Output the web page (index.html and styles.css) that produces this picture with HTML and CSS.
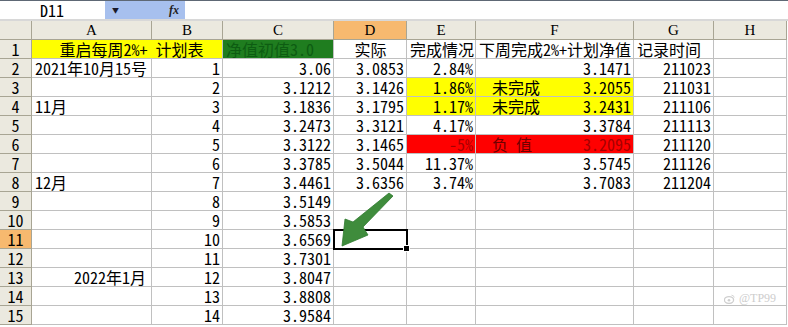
FILE: index.html
```html
<!DOCTYPE html>
<html>
<head>
<meta charset="utf-8">
<link rel="stylesheet" href="styles.css">
</head>
<body>
<div class="app">
  <div class="fbar">
    <div class="namebox">D11</div>
    <div class="drop"><span class="tri">▼</span><span class="fx">fx</span></div>
    <div class="formula"></div>
  </div>
  <div class="grid">
    <div class="c h corner"></div>
    <div class="c h">A</div>
    <div class="c h">B</div>
    <div class="c h">C</div>
    <div class="c h hs">D</div>
    <div class="c h">E</div>
    <div class="c h">F</div>
    <div class="c h">G</div>
    <div class="c h">H</div>

    <div class="c r">1</div>
    <div class="c yel span2 ctr">&nbsp;重启每周2%+ 计划表</div>
    <div class="c grn">净值初值3.0</div>
    <div class="c ctr">实际</div>
    <div class="c">完成情况</div>
    <div class="c">下周完成2%+计划净值</div>
    <div class="c">记录时间</div>
    <div class="c"></div>

    <div class="c r">2</div>
    <div class="c">2021年10月15号</div>
    <div class="c n">1</div>
    <div class="c n">3.06</div>
    <div class="c n">3.0853</div>
    <div class="c n">2.84%</div>
    <div class="c n">3.1471</div>
    <div class="c n">211023</div>
    <div class="c"></div>

    <div class="c r">3</div>
    <div class="c"></div>
    <div class="c n">2</div>
    <div class="c n">3.1212</div>
    <div class="c n">3.1426</div>
    <div class="c n yel">1.86%</div>
    <div class="c yel split"><span class="lbl">未完成</span><span>3.2055</span></div>
    <div class="c n">211031</div>
    <div class="c"></div>

    <div class="c r">4</div>
    <div class="c">11月</div>
    <div class="c n">3</div>
    <div class="c n">3.1836</div>
    <div class="c n">3.1795</div>
    <div class="c n yel">1.17%</div>
    <div class="c yel split"><span class="lbl">未完成</span><span>3.2431</span></div>
    <div class="c n">211106</div>
    <div class="c"></div>

    <div class="c r">5</div>
    <div class="c"></div>
    <div class="c n">4</div>
    <div class="c n">3.2473</div>
    <div class="c n">3.3121</div>
    <div class="c n">4.17%</div>
    <div class="c n">3.3784</div>
    <div class="c n">211113</div>
    <div class="c"></div>

    <div class="c r">6</div>
    <div class="c"></div>
    <div class="c n">5</div>
    <div class="c n">3.3122</div>
    <div class="c n">3.1465</div>
    <div class="c n red">-5%</div>
    <div class="c red split"><span class="lbl neg">负 值</span><span>3.2095</span></div>
    <div class="c n">211120</div>
    <div class="c"></div>

    <div class="c r">7</div>
    <div class="c"></div>
    <div class="c n">6</div>
    <div class="c n">3.3785</div>
    <div class="c n">3.5044</div>
    <div class="c n">11.37%</div>
    <div class="c n">3.5745</div>
    <div class="c n">211126</div>
    <div class="c"></div>

    <div class="c r">8</div>
    <div class="c">12月</div>
    <div class="c n">7</div>
    <div class="c n">3.4461</div>
    <div class="c n">3.6356</div>
    <div class="c n">3.74%</div>
    <div class="c n">3.7083</div>
    <div class="c n">211204</div>
    <div class="c"></div>

    <div class="c r">9</div>
    <div class="c"></div>
    <div class="c n">8</div>
    <div class="c n">3.5149</div>
    <div class="c"></div><div class="c"></div><div class="c"></div><div class="c"></div><div class="c"></div>

    <div class="c r">10</div>
    <div class="c"></div>
    <div class="c n">9</div>
    <div class="c n">3.5853</div>
    <div class="c"></div><div class="c"></div><div class="c"></div><div class="c"></div><div class="c"></div>

    <div class="c r rs">11</div>
    <div class="c"></div>
    <div class="c n">10</div>
    <div class="c n">3.6569</div>
    <div class="c sel"></div><div class="c"></div><div class="c"></div><div class="c"></div><div class="c"></div>

    <div class="c r">12</div>
    <div class="c"></div>
    <div class="c n">11</div>
    <div class="c n">3.7301</div>
    <div class="c"></div><div class="c"></div><div class="c"></div><div class="c"></div><div class="c"></div>

    <div class="c r">13</div>
    <div class="c n pr">2022年1月</div>
    <div class="c n">12</div>
    <div class="c n">3.8047</div>
    <div class="c"></div><div class="c"></div><div class="c"></div><div class="c"></div><div class="c"></div>

    <div class="c r">14</div>
    <div class="c"></div>
    <div class="c n">13</div>
    <div class="c n">3.8808</div>
    <div class="c"></div><div class="c"></div><div class="c"></div><div class="c"></div><div class="c"></div>

    <div class="c r">15</div>
    <div class="c"></div>
    <div class="c n">14</div>
    <div class="c n">3.9584</div>
    <div class="c"></div><div class="c"></div><div class="c"></div><div class="c"></div><div class="c"></div>
  </div>

  <svg class="arrow" width="788" height="327" viewBox="0 0 788 327">
    <polygon points="389,193 393,196 363,227 368,235 342,246 345,219 353,222" fill="#3f8c3c" stroke="#2f7a2f" stroke-width="0.8" stroke-linejoin="round"/>
  </svg>

  <div class="wm">
    <svg width="11" height="10" viewBox="0 0 11 10"><ellipse cx="5" cy="6" rx="4.6" ry="3.4" fill="none" stroke="#cfcfcf" stroke-width="1.3"/><circle cx="5" cy="6.3" r="1.3" fill="#cfcfcf"/><path d="M7.5 1.2 Q10 1.2 10.2 3.6" fill="none" stroke="#d6d6d6" stroke-width="1"/></svg>
    <span>@TP99</span>
  </div>
</div>
</body>
</html>
```

FILE: styles.css
```css
html, body {
  margin: 0;
  padding: 0;
  background: #ffffff;
}
body {
  font-family: "Noto Sans Mono CJK SC", "Noto Sans CJK SC", "Liberation Mono", monospace;
  font-size: 16px;
  color: #000;
  overflow: hidden;
}
.app {
  position: relative;
  width: 788px;
  height: 327px;
  overflow: hidden;
}
.fbar {
  display: flex;
  height: 18px;
  border-top: 1px solid #5e6875;
  border-bottom: 2px solid #d8d8d8;
  background: #fff;
}
.namebox {
  width: 105px;
  padding-left: 40px;
  box-sizing: border-box;
  line-height: 18px;
  font-size: 16px;
}
.drop {
  width: 80px;
  background: #a7c0ee;
  display: flex;
  align-items: center;
  justify-content: space-between;
  padding: 0 6px 0 7px;
  box-sizing: border-box;
}
.tri {
  font-size: 7px;
  color: #1a1a2a;
}
.fx {
  font-family: "Liberation Serif", serif;
  font-style: italic;
  font-weight: bold;
  font-size: 12px;
  color: #222;
}
.formula {
  flex: 1;
}
.grid {
  display: grid;
  grid-template-columns: 32px 120px 71px 111px 73px 69px 158px 80px 73px;
  grid-auto-rows: 19px;
}
.c {
  box-sizing: border-box;
  border-right: 1px solid #c0c0c0;
  border-bottom: 1px solid #c0c0c0;
  padding: 0 2px 0 3px;
  line-height: 18px;
  white-space: nowrap;
}
.n {
  text-align: right;
  padding-right: 2px;
}
.pr {
  padding-right: 5px;
}
.ctr {
  text-align: center;
}
.span2 {
  grid-column: span 2;
}
.h, .r {
  background: #ebe9df;
  border-right-color: #a8a594;
  border-bottom-color: #a8a594;
  text-align: center;
  padding: 0;
}
.h {
  font-family: "Liberation Serif", serif;
  font-size: 15px;
}
.hs, .rs {
  background: #f7b96f;
}
.yel {
  background: #ffff00;
}
.grn {
  background: #1f7d1f;
  color: #0d5c12;
}
.red {
  background: #ff0000;
  color: #a40000;
}
.split {
  display: flex;
  justify-content: space-between;
  padding-left: 16px;
  padding-right: 2px;
}
.neg {
  color: #6e0000;
}
.sel {
  position: relative;
  z-index: 2;
  outline: 2px solid #000;
  outline-offset: -1px;
}
.sel::after {
  content: "";
  position: absolute;
  right: -4px;
  bottom: -4px;
  width: 5px;
  height: 5px;
  background: #000;
  border: 1px solid #fff;
}
.arrow {
  position: absolute;
  left: 0;
  top: 0;
  pointer-events: none;
  z-index: 3;
}
.wm {
  position: absolute;
  left: 724px;
  top: 291px;
  display: flex;
  align-items: center;
  gap: 4px;
  font-family: "Liberation Serif", serif;
  font-size: 12px;
  color: #cdcdcd;
  z-index: 3;
}
```
